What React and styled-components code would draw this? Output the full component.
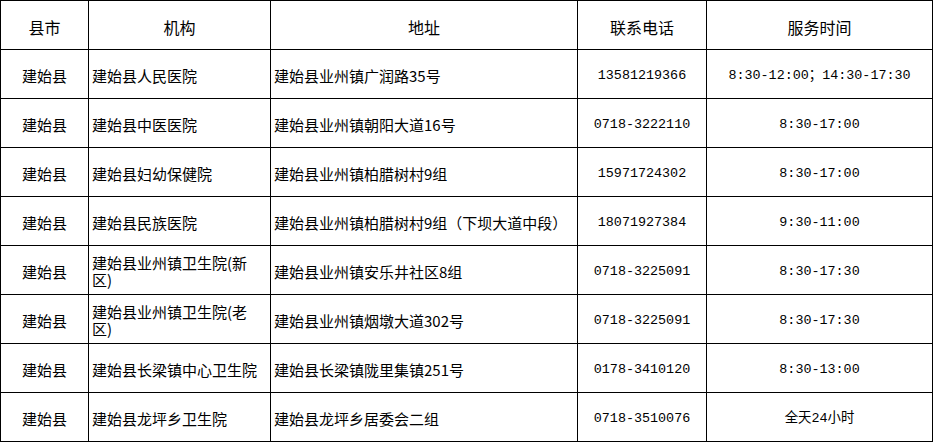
import React from "react";
import styled, { createGlobalStyle } from "styled-components";

const GlobalStyle = createGlobalStyle`
  html, body {
    margin: 0;
    padding: 0;
    background: #fff;
  }
  body {
    font-family: "Noto Sans CJK SC", "Noto Sans", sans-serif;
    color: #000;
  }
`;

// Grid with 1px gaps over a black background draws the cell lines
const Table = styled.div`
  display: grid;
  grid-template-columns: 87px 181px 306px 128px 225px;
  grid-auto-rows: 48px;
  gap: 1px;
  padding: 1px;
  width: max-content;
  background: #000;
`;

const HeadCell = styled.div`
  background: #fff;
  display: flex;
  align-items: center;
  justify-content: center;
  padding-top: 3px;
  box-sizing: border-box;
  font-size: 16px;
  line-height: 18px;
`;

const Cell = styled.div`
  background: #fff;
  display: flex;
  align-items: center;
  justify-content: ${({ $left }) => ($left ? "flex-start" : "center")};
  padding: ${({ $left }) => ($left ? "2px 11px 0 3px" : "2px 0 0 0")};
  box-sizing: border-box;
  font-family: ${({ $mono }) =>
    $mono
      ? '"Liberation Mono", "Noto Sans CJK SC", monospace'
      : '"Noto Sans CJK SC", "Noto Sans", sans-serif'};
  font-size: ${({ $mono }) => ($mono ? "13.4px" : "15px")};
  line-height: 17px;
`;

const headers = ["县市", "机构", "地址", "联系电话", "服务时间"];

const rows = [
  ["建始县", "建始县人民医院", "建始县业州镇广润路35号", "13581219366", "8:30-12:00；14:30-17:30"],
  ["建始县", "建始县中医医院", "建始县业州镇朝阳大道16号", "0718-3222110", "8:30-17:00"],
  ["建始县", "建始县妇幼保健院", "建始县业州镇柏腊树村9组", "15971724302", "8:30-17:00"],
  ["建始县", "建始县民族医院", "建始县业州镇柏腊树村9组（下坝大道中段）", "18071927384", "9:30-11:00"],
  ["建始县", "建始县业州镇卫生院(新区)", "建始县业州镇安乐井社区8组", "0718-3225091", "8:30-17:30"],
  ["建始县", "建始县业州镇卫生院(老区)", "建始县业州镇烟墩大道302号", "0718-3225091", "8:30-17:30"],
  ["建始县", "建始县长梁镇中心卫生院", "建始县长梁镇陇里集镇251号", "0178-3410120", "8:30-13:00"],
  ["建始县", "建始县龙坪乡卫生院", "建始县龙坪乡居委会二组", "0718-3510076", "全天24小时"],
];

const App = () => {
  return (
    <>
      <GlobalStyle />
      <Table role="table">
        {headers.map((h) => (
          <HeadCell key={h} role="columnheader">{h}</HeadCell>
        ))}
        {rows.map((r, i) => (
          <React.Fragment key={i}>
            <Cell role="cell">{r[0]}</Cell>
            <Cell role="cell" $left>{r[1]}</Cell>
            <Cell role="cell" $left>{r[2]}</Cell>
            <Cell role="cell" $mono>{r[3]}</Cell>
            <Cell role="cell" $mono>{r[4]}</Cell>
          </React.Fragment>
        ))}
      </Table>
    </>
  );
};

export default App;
